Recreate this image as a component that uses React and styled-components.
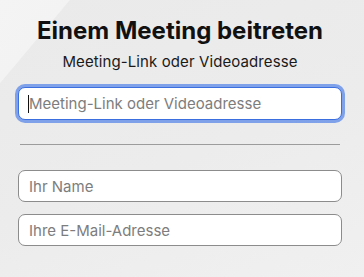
import React from "react";
import styled, { createGlobalStyle, css } from "styled-components";

const Global = createGlobalStyle`
  html, body { margin: 0; padding: 0; }
  body {
    width: 364px;
    height: 277px;
    overflow: hidden;
    font-family: Inter, "Noto Sans", "Liberation Sans", sans-serif;
  }
`;

const Page = styled.div`
  box-sizing: border-box;
  width: 364px;
  height: 277px;
  padding: 16px 22px 0 18px;
  display: flex;
  flex-direction: column;
  background:
    linear-gradient(130deg, #f4f4f4 0, #f3f3f3 53px, rgba(0,0,0,0) 54px),
    linear-gradient(160deg, #eaeaea 0%, #ececec 55%, #f0f0f0 100%);
`;

const Title = styled.h1`
  margin: 0;
  font-size: 24px;
  line-height: 29px;
  font-weight: 700;
  letter-spacing: 0;
  color: #111;
  text-align: center;
`;

const Subtitle = styled.p`
  margin: 7px 0 0;
  font-size: 15px;
  line-height: 20px;
  font-weight: 400;
  letter-spacing: 0.1px;
  color: #1a1a1a;
  text-align: center;
`;

const FieldWrap = styled.div`
  position: relative;
  margin-top: ${(p) => p.$top}px;
`;

const Field = styled.input`
  box-sizing: border-box;
  display: block;
  width: 100%;
  height: ${(p) => p.$h}px;
  padding: 0 10px;
  border-radius: 7px;
  background: #fff;
  font-family: Inter, "Noto Sans", "Liberation Sans", sans-serif;
  font-size: 15px;
  color: #222;
  outline: none;
  border: 1px solid #8c8c8c;
  &::placeholder { color: #7d7d7d; opacity: 1; }
  ${(p) =>
    p.$focused &&
    css`
      border-color: #3b6fdf;
      box-shadow: 0 0 0 3px rgba(100, 142, 234, 0.8);
    `}
`;

const Caret = styled.span`
  position: absolute;
  left: 10px;
  top: 8px;
  width: 1px;
  height: 18px;
  background: #111;
`;

const Separator = styled.hr`
  margin: 24px 2px 0;
  border: none;
  height: 1px;
  background: #9c9c9c;
`;

export default function App() {
  return (
    <>
      <Global />
      <Page>
        <Title>Einem Meeting beitreten</Title>
        <Subtitle>Meeting-Link oder Videoadresse</Subtitle>
        <FieldWrap $top={15}>
          <Field $focused $h={33} placeholder="Meeting-Link oder Videoadresse" readOnly />
          <Caret />
        </FieldWrap>
        <Separator />
        <FieldWrap $top={25}>
          <Field $h={32} placeholder="Ihr Name" readOnly />
        </FieldWrap>
        <FieldWrap $top={12}>
          <Field $h={32} placeholder="Ihre E-Mail-Adresse" readOnly />
        </FieldWrap>
      </Page>
    </>
  );
}
